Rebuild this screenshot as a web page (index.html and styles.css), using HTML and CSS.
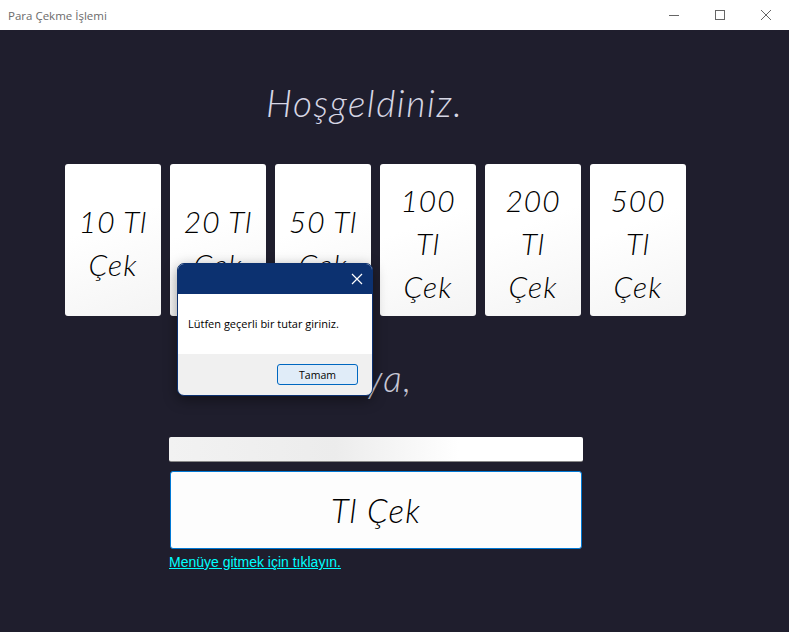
FILE: index.html
```html
<!DOCTYPE html>
<html lang="tr">
<head>
<meta charset="utf-8">
<title>Para Çekme İşlemi</title>
<link rel="stylesheet" href="styles.css">
</head>
<body>
<div class="titlebar">
  <span class="title">Para Çekme İşlemi</span>
  <div class="controls">
    <svg class="ctl" width="12" height="12" viewBox="0 0 12 12"><path d="M1 6.5h10" stroke="#666" stroke-width="1"/></svg>
    <svg class="ctl" width="12" height="12" viewBox="0 0 12 12"><rect x="1.5" y="1.5" width="9" height="9" fill="none" stroke="#666" stroke-width="1"/></svg>
    <svg class="ctl" width="12" height="12" viewBox="0 0 12 12"><path d="M1 1l10 10M11 1L1 11" stroke="#666" stroke-width="1"/></svg>
  </div>
</div>
<main class="app">
  <h1 class="welcome">Hoşgeldiniz.</h1>
  <div class="cards">
    <div class="card">10 Tl<br>Çek</div>
    <div class="card">20 Tl<br>Çek</div>
    <div class="card">50 Tl<br>Çek</div>
    <div class="card">100<br>Tl<br>Çek</div>
    <div class="card">200<br>Tl<br>Çek</div>
    <div class="card">500<br>Tl<br>Çek</div>
  </div>
  <div class="form">
    <p class="or">Veya,</p>
    <input class="amount" type="text">
    <button class="withdraw">Tl Çek</button>
    <a class="menu-link" href="#">Menüye gitmek için tıklayın.</a>
  </div>
  <div class="dialog">
    <div class="dlg-head">
      <svg width="12" height="12" viewBox="0 0 12 12"><path d="M1 1l10 10M11 1L1 11" stroke="#fff" stroke-width="1.2"/></svg>
    </div>
    <div class="dlg-body">Lütfen geçerli bir tutar giriniz.</div>
    <div class="dlg-foot"><button class="ok">Tamam</button></div>
  </div>
</main>
</body>
</html>
```
FILE: styles.css
```css
* { box-sizing: border-box; }
html, body { margin: 0; height: 100%; }
body {
  background: #1f1e2d;
  font-family: "Lato", "Open Sans", sans-serif;
  overflow: hidden;
}
.titlebar {
  height: 30px;
  background: #ffffff;
  display: flex;
  align-items: center;
  justify-content: space-between;
  padding-left: 8px;
}
.title {
  font-family: "Open Sans", "DejaVu Sans", sans-serif;
  font-size: 11.5px;
  color: #6b6b6b;
}
.controls { display: flex; height: 100%; }
.ctl { margin: 9px 17px 0 17px; }
.controls .ctl:last-child { margin-right: 17px; }
.app {
  position: relative;
  height: calc(100% - 30px);
}
.welcome {
  margin: 0;
  padding-top: 51px;
  padding-left: 266px;
  font-weight: 300;
  font-style: italic;
  font-size: 37px;
  line-height: 44px;
  letter-spacing: 1.6px;
  color: #d6d6e4;
}
.cards {
  display: flex;
  gap: 9px;
  margin-left: 65px;
  margin-top: 39px;
}
.card {
  width: 96px;
  height: 152px;
  border-radius: 3px;
  background: linear-gradient(160deg, #ffffff 40%, #f4f4f4 100%);
  display: flex;
  align-items: center;
  justify-content: center;
  text-align: center;
  font-style: italic;
  font-weight: 300;
  font-size: 30px;
  line-height: 43px;
  letter-spacing: 1px;
  padding-top: 6px;
  color: #000;
}
.form {
  width: 414px;
  margin-left: 169px;
  display: flex;
  flex-direction: column;
}
.or {
  margin: 42px 0 0 0;
  padding-left: 156px;
  height: 79px;
  font-style: italic;
  font-weight: 300;
  font-size: 37px;
  line-height: 40px;
  letter-spacing: 1.5px;
  color: #c8c8d6;
}
.amount {
  height: 25px;
  border: none;
  border-bottom: 1px solid #888;
  border-radius: 2px;
  background: linear-gradient(90deg, #f2f2f2 0%, #ececec 40%, #ffffff 70%);
  margin: 0;
}
.withdraw {
  margin: 9px 1px 0 1px;
  height: 78px;
  border: 1px solid #0078d4;
  border-radius: 3px;
  background: #fdfdfd;
  font-family: "Lato", "Open Sans", sans-serif;
  font-style: italic;
  font-weight: 300;
  font-size: 33px;
  letter-spacing: 1.2px;
  color: #000;
}
.menu-link {
  margin-top: 5px;
  font-family: "Liberation Sans", Arial, sans-serif;
  font-size: 14px;
  color: #00ffff;
  text-decoration: underline;
}
.dialog {
  position: absolute;
  left: 177px;
  top: 233px;
  width: 196px;
  height: 133px;
  border: 1px solid #0c3170;
  border-radius: 7px;
  overflow: hidden;
  background: #f0f0f0;
  display: flex;
  flex-direction: column;
  box-shadow: 0 4px 14px rgba(0,0,0,0.4);
}
.dlg-head {
  height: 30px;
  background: #0c3170;
  display: flex;
  justify-content: flex-end;
  align-items: center;
  padding-right: 9px;
}
.dlg-body {
  height: 60px;
  background: #fff;
  font-family: "Open Sans", "DejaVu Sans", sans-serif;
  font-size: 11px;
  color: #000;
  padding: 22px 0 0 10px;
}
.dlg-foot {
  flex: 1;
  display: flex;
  justify-content: flex-end;
  align-items: center;
  padding-right: 14px;
}
.ok {
  width: 81px;
  height: 21px;
  border: 1px solid #0067c0;
  border-radius: 3px;
  background: #e0ecf8;
  font-family: "Open Sans", "DejaVu Sans", sans-serif;
  font-size: 10.5px;
  color: #000;
  padding: 0;
}
```
